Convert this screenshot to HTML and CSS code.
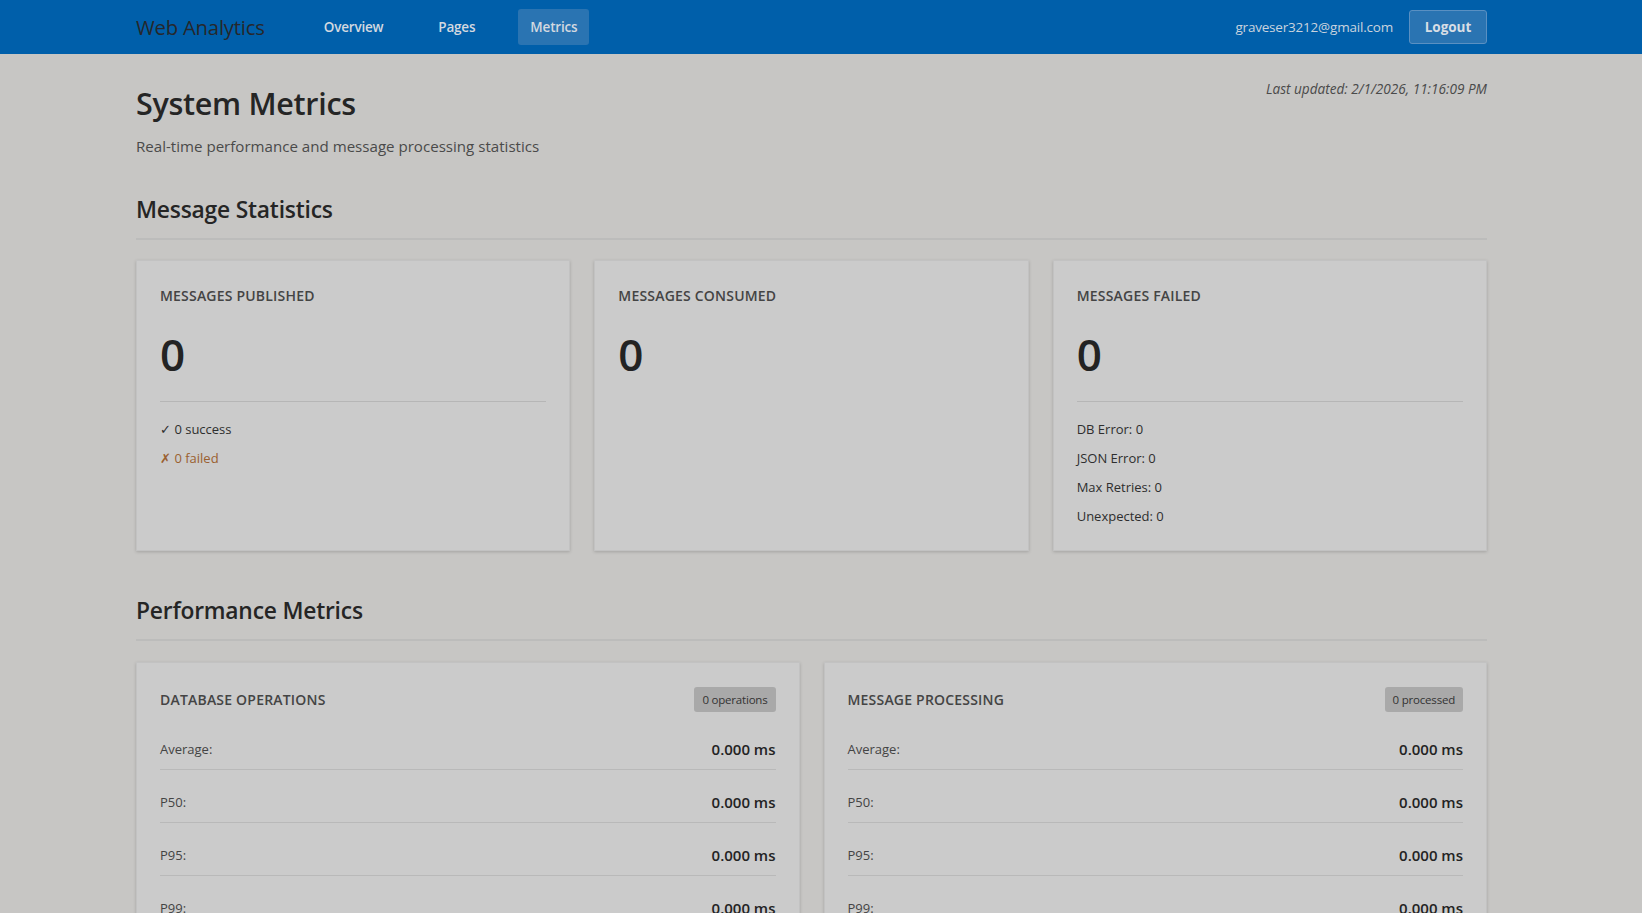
FILE: index.html
```html
<!DOCTYPE html>
<html lang="en">
<head>
<meta charset="utf-8">
<title>System Metrics - Web Analytics</title>
<link rel="stylesheet" href="styles.css">
</head>
<body>
<header class="navbar">
  <div class="nav-inner">
    <div class="nav-left">
      <span class="brand">Web Analytics</span>
      <nav class="nav-links">
        <a class="nav-link">Overview</a>
        <a class="nav-link">Pages</a>
        <a class="nav-link active">Metrics</a>
      </nav>
    </div>
    <div class="nav-right">
      <span class="user-email">graveser3212@gmail.com</span>
      <button class="logout">Logout</button>
    </div>
  </div>
</header>

<main class="container">
  <div class="page-head">
    <div>
      <h1 class="page-title">System Metrics</h1>
      <p class="page-sub">Real-time performance and message processing statistics</p>
    </div>
    <div class="updated">Last updated: 2/1/2026, 11:16:09 PM</div>
  </div>

  <section class="section">
    <h2 class="section-title">Message Statistics</h2>
    <div class="grid-3">
      <div class="card">
        <div class="card-label">Messages Published</div>
        <div class="big-num">0</div>
        <div class="card-details">
          <div class="detail">✓ 0 success</div>
          <div class="detail failed">✗ 0 failed</div>
        </div>
      </div>
      <div class="card">
        <div class="card-label">Messages Consumed</div>
        <div class="big-num">0</div>
      </div>
      <div class="card">
        <div class="card-label">Messages Failed</div>
        <div class="big-num">0</div>
        <div class="card-details">
          <div class="detail">DB Error: 0</div>
          <div class="detail">JSON Error: 0</div>
          <div class="detail">Max Retries: 0</div>
          <div class="detail">Unexpected: 0</div>
        </div>
      </div>
    </div>
  </section>

  <section class="section perf-section">
    <h2 class="section-title">Performance Metrics</h2>
    <div class="grid-2">
      <div class="card perf">
        <div class="perf-head">
          <div class="card-label">Database Operations</div>
          <span class="badge">0 operations</span>
        </div>
        <div class="row"><span class="row-label">Average:</span><span class="row-val">0.000 ms</span></div>
        <div class="row"><span class="row-label">P50:</span><span class="row-val">0.000 ms</span></div>
        <div class="row"><span class="row-label">P95:</span><span class="row-val">0.000 ms</span></div>
        <div class="row"><span class="row-label">P99:</span><span class="row-val">0.000 ms</span></div>
      </div>
      <div class="card perf">
        <div class="perf-head">
          <div class="card-label">Message Processing</div>
          <span class="badge">0 processed</span>
        </div>
        <div class="row"><span class="row-label">Average:</span><span class="row-val">0.000 ms</span></div>
        <div class="row"><span class="row-label">P50:</span><span class="row-val">0.000 ms</span></div>
        <div class="row"><span class="row-label">P95:</span><span class="row-val">0.000 ms</span></div>
        <div class="row"><span class="row-label">P99:</span><span class="row-val">0.000 ms</span></div>
      </div>
    </div>
  </section>
</main>
</body>
</html>
```

FILE: styles.css
```css
* { box-sizing: border-box; }

html, body {
  margin: 0;
  padding: 0;
}

body {
  background: #c7c6c4;
  font-family: "Open Sans", "Noto Sans", "Liberation Sans", sans-serif;
  color: #2b2b2b;
  overflow: hidden;
}

.navbar {
  background: #005faa;
  height: 54px;
}

.nav-inner {
  width: 1351px;
  margin-left: 136px;
  height: 54px;
  display: flex;
  align-items: center;
  justify-content: space-between;
}

.nav-left {
  display: flex;
  align-items: center;
}

.brand {
  font-size: 20.3px;
  color: #26272b;
  margin-right: 47px;
  letter-spacing: -0.2px;
}

.nav-links {
  display: flex;
  gap: 31px;
}

.nav-link {
  font-size: 13.5px;
  font-weight: 600;
  color: #d3d9e0;
  padding: 8px 12px;
  border-radius: 3px;
  line-height: 20px;
  letter-spacing: -0.2px;
}

.nav-link.active {
  background: #2a74b2;
}

.nav-right {
  display: flex;
  align-items: center;
  gap: 16px;
}

.user-email {
  font-size: 13.5px;
  color: #c9d3de;
  letter-spacing: -0.2px;
}

.logout {
  font-family: inherit;
  font-size: 13.5px;
  font-weight: 700;
  color: #d8dee5;
  background: #2a74b2;
  border: 1px solid #5a90c2;
  border-radius: 3px;
  width: 78px;
  height: 34px;
  padding: 0;
}

.container {
  width: 1351px;
  margin-left: 136px;
  padding-top: 27px;
}

.page-head {
  display: flex;
  justify-content: space-between;
  align-items: flex-start;
}

.page-title {
  margin: 0;
  font-size: 30.5px;
  font-weight: 600;
  line-height: 44px;
  color: #252525;
  letter-spacing: -0.3px;
}

.page-sub {
  margin: 10px 0 0;
  font-size: 15.1px;
  line-height: 22px;
  color: #4a4a4a;
}

.updated {
  font-size: 13.6px;
  font-style: italic;
  color: #4a4a4a;
  margin-top: -2px;
}

.section {
  margin-top: 37px;
}

.section.perf-section {
  margin-top: 44px;
}

.section-title {
  margin: 0 0 20px;
  font-size: 22.8px;
  font-weight: 600;
  line-height: 32px;
  color: #252525;
  padding-bottom: 12px;
  border-bottom: 2px solid #bcbcbb;
  letter-spacing: -0.2px;
}

.perf-section .section-title {
  margin-bottom: 21px;
}

.grid-3 {
  display: grid;
  grid-template-columns: repeat(3, 1fr);
  gap: 24px;
}

.grid-2 {
  display: grid;
  grid-template-columns: repeat(2, 1fr);
  gap: 24px;
}

.card {
  background: #cbcbcb;
  border: 1px solid #c2c2c2;
  box-shadow: 0 1px 3px rgba(0, 0, 0, 0.18);
  padding: 25px 23px 24px;
}

.card-label {
  font-size: 14px;
  font-weight: 600;
  text-transform: uppercase;
  color: #444;
  line-height: 20px;
  letter-spacing: 0.2px;
}

.big-num {
  font-size: 44px;
  font-weight: 600;
  color: #232323;
  line-height: 60px;
  margin-top: 18px;
}

.card-details {
  margin-top: 17px;
  border-top: 1px solid #b6b6b6;
  padding-top: 17px;
}

.detail {
  font-size: 13px;
  line-height: 20px;
  color: #2e2e2e;
  margin-bottom: 9px;
}

.detail:last-child {
  margin-bottom: 0;
}

.detail.failed {
  color: #9a6030;
}

.card.perf {
  padding: 24px 23px 0;
  height: 270px;
}

.perf-head {
  display: flex;
  justify-content: space-between;
  align-items: center;
  margin-bottom: 5px;
}

.badge {
  background: #a9a9a9;
  color: #333;
  font-size: 11.5px;
  padding: 3px 8px;
  border-radius: 3px;
  line-height: 19px;
  letter-spacing: -0.2px;
}

.row {
  display: flex;
  justify-content: space-between;
  align-items: center;
  padding: 22px 0 10px;
  line-height: 20px;
  border-bottom: 1px solid #b9b9b9;
}

.row-label {
  font-size: 13px;
  color: #444;
}

.row-val {
  font-size: 15px;
  font-weight: 600;
  color: #232323;
}
```
